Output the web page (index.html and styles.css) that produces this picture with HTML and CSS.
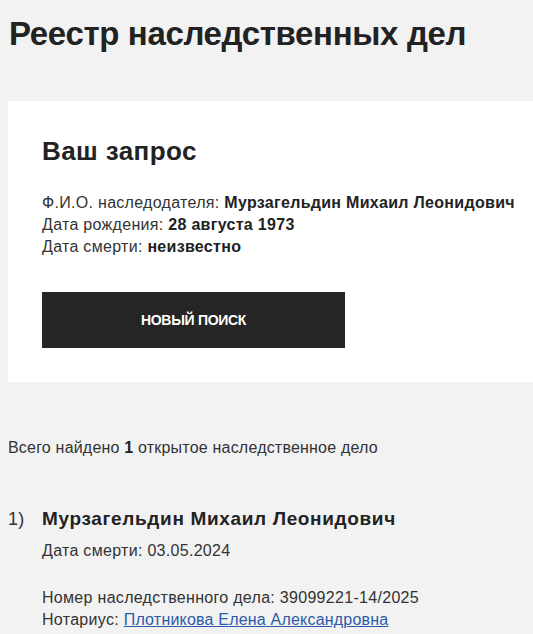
FILE: index.html
```html
<!DOCTYPE html>
<html>
<head>
	<title>Реестр наследственных дел</title>
	<meta charset="utf-8">
	<link rel="stylesheet" href="styles.css">
</head>
<body>
	<div class="page">
		<h1 class="page_title">Реестр наследственных дел</h1>
		<div class="query_card">
			<h2 class="query_title">Ваш запрос</h2>
			<div class="query_info">
				<p>Ф.И.О. наследодателя: <b>Мурзагельдин Михаил Леонидович</b></p>
				<p>Дата рождения: <b>28 августа 1973</b></p>
				<p>Дата смерти: <b>неизвестно</b></p>
			</div>
			<button class="new_search">НОВЫЙ ПОИСК</button>
		</div>
		<p class="found_total">Всего найдено <b>1</b> открытое наследственное дело</p>
		<div class="case_item">
			<div class="case_num">1)</div>
			<div class="case_body">
				<h3 class="case_name">Мурзагельдин Михаил Леонидович</h3>
				<p class="case_death">Дата смерти: 03.05.2024</p>
				<p>Номер наследственного дела: 39099221-14/2025</p>
				<p>Нотариус: <a href="#" class="notary_link">Плотникова Елена Александровна</a></p>
			</div>
		</div>
	</div>
</body>
</html>
```

FILE: styles.css
```css
*{
	box-sizing:border-box;
	margin:0;
	padding:0;
}
body{
	background:#f2f2f2;
	color:#222;
	font-family:"Liberation Sans",Arial,sans-serif;
	font-size:16px;
	line-height:22px;
	letter-spacing:0.3px;
	overflow:hidden;
}
.page{
	padding:0 0 0 8px;
}
.page_title{
	margin:13px 0 0 1px;
	font-size:33px;
	line-height:41px;
	font-weight:bold;
	color:#222;
	letter-spacing:-0.35px;
}
.query_card{
	margin-top:47px;
	background:#fff;
	padding:35px 20px 34px 34px;
}
.query_title{
	font-size:26px;
	line-height:31px;
	font-weight:bold;
	color:#222;
	letter-spacing:0.4px;
}
.query_info{
	margin-top:25px;
	color:#333;
	white-space:nowrap;
}
.query_info b{
	color:#222;
}
.new_search{
	display:block;
	margin-top:34px;
	width:303px;
	height:56px;
	border:none;
	background:#262626;
	color:#fff;
	font-family:"Liberation Sans",Arial,sans-serif;
	font-size:14px;
	font-weight:bold;
	letter-spacing:-0.3px;
	cursor:pointer;
}
.found_total{
	margin-top:55px;
	color:#333;
	letter-spacing:0.2px;
}
.found_total b{
	color:#222;
}
.case_item{
	display:flex;
	margin-top:48px;
	color:#333;
}
.case_num{
	width:34px;
	font-size:18px;
	line-height:24px;
}
.case_name{
	font-size:19px;
	line-height:24px;
	font-weight:bold;
	color:#222;
	letter-spacing:0.65px;
}
.case_death{
	margin-top:9px;
	margin-bottom:25px;
}
.notary_link{
	color:#2b5ba8;
	text-decoration:underline;
	letter-spacing:0.2px;
}
```
